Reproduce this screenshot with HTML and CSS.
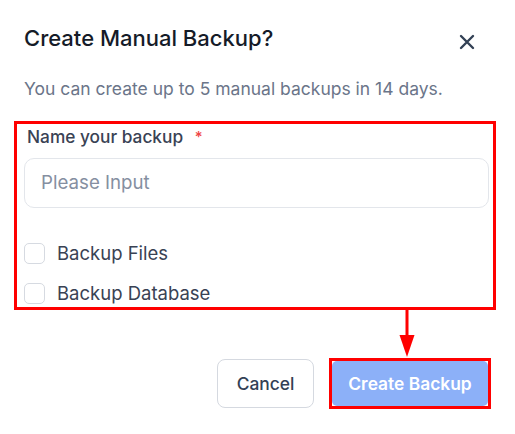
FILE: index.html
```html
<!DOCTYPE html>
<html>
<head>
<meta charset="utf-8">
<link rel="stylesheet" href="styles.css">
</head>
<body>
<div class="dialog">
  <div class="header">
    <h1 class="title">Create Manual Backup?</h1>
    <button class="close" aria-label="Close">
      <svg width="16" height="16" viewBox="0 0 16 16"><path d="M2 2 L14 14 M14 2 L2 14" stroke="#334155" stroke-width="2.4" stroke-linecap="round" fill="none"/></svg>
    </button>
  </div>
  <p class="subtitle">You can create up to 5 manual backups in 14 days.</p>
  <div class="form-box">
    <label class="field-label">Name your backup <span class="req">*</span></label>
    <div class="input">Please Input</div>
    <div class="checks">
      <div class="check-row"><span class="box"></span><span class="check-text">Backup Files</span></div>
      <div class="check-row"><span class="box"></span><span class="check-text">Backup Database</span></div>
    </div>
  </div>
  <div class="arrow-row">
    <svg width="16" height="48" viewBox="0 0 16 48"><rect x="6.5" y="0" width="3" height="26" fill="#ff0000"/><polygon points="0.5,25 15.5,25 8,47" fill="#ff0000"/></svg>
  </div>
  <div class="actions">
    <button class="btn cancel">Cancel</button>
    <div class="highlight"><button class="btn primary">Create Backup</button></div>
  </div>
</div>
</body>
</html>
```
FILE: styles.css
```css
* { box-sizing: border-box; }
html, body { margin: 0; padding: 0; background: #ffffff; }
body { font-family: Inter, "Noto Sans", sans-serif; width: 515px; height: 434px; overflow: hidden; }
.dialog { padding: 23px 24px 0 24px; }
.header { display: flex; justify-content: space-between; align-items: flex-start; padding-right: 16px; }
.title { margin: 0; font-size: 22px; line-height: 30px; font-weight: 500; color: #151b28; }
.close { border: 0; background: none; padding: 0; margin-top: 11px; width: 16px; height: 16px; display: block; }
.close svg { display: block; }
.subtitle { margin: 24px 0 0 0; font-size: 17.5px; line-height: 24px; color: #6b7589; }
.form-box { margin: 20px -5px 0 -10px; border: 3px solid #ff0000; padding: 1px 4px 0 7px; }
.field-label { display: block; margin-left: 3px; font-size: 17.3px; line-height: 24px; font-weight: 500; color: #394254; }
.req { color: #ef4444; margin-left: 7px; font-size: 15px; vertical-align: top; }
.input { margin-top: 9px; height: 50px; border: 1px solid #e3e6eb; border-radius: 10px; padding: 0 16px; font-size: 18.7px; line-height: 48px; color: #858fa1; }
.checks { margin-top: 31px; display: flex; flex-direction: column; gap: 12px; }
.check-row { display: flex; align-items: center; height: 28px; }
.box { width: 21px; height: 21px; border: 1px solid #d6dae1; border-radius: 5px; background: #fff; }
.check-text { margin-left: 12px; font-size: 18.5px; color: #394254; }
.arrow-row { display: flex; justify-content: flex-end; padding-right: 76px; height: 48px; }
.arrow-row svg { display: block; }
.actions { display: flex; justify-content: flex-end; align-items: center; gap: 15px; }
.btn { font-family: Inter, "Noto Sans", sans-serif; font-size: 17.4px; font-weight: 500; }
.cancel { width: 97px; height: 49px; border-radius: 8px; background: #fff; border: 1px solid #d5d9e0; color: #334155; }
.highlight { width: 162px; height: 51px; border: 3px solid #ff0000; background: #fff; display: flex; }
.primary { width: 156px; height: 45px; border-radius: 5px; background: #8cb0f8; border: 0; color: #ffffff; font-weight: 600; padding: 0; }
```
